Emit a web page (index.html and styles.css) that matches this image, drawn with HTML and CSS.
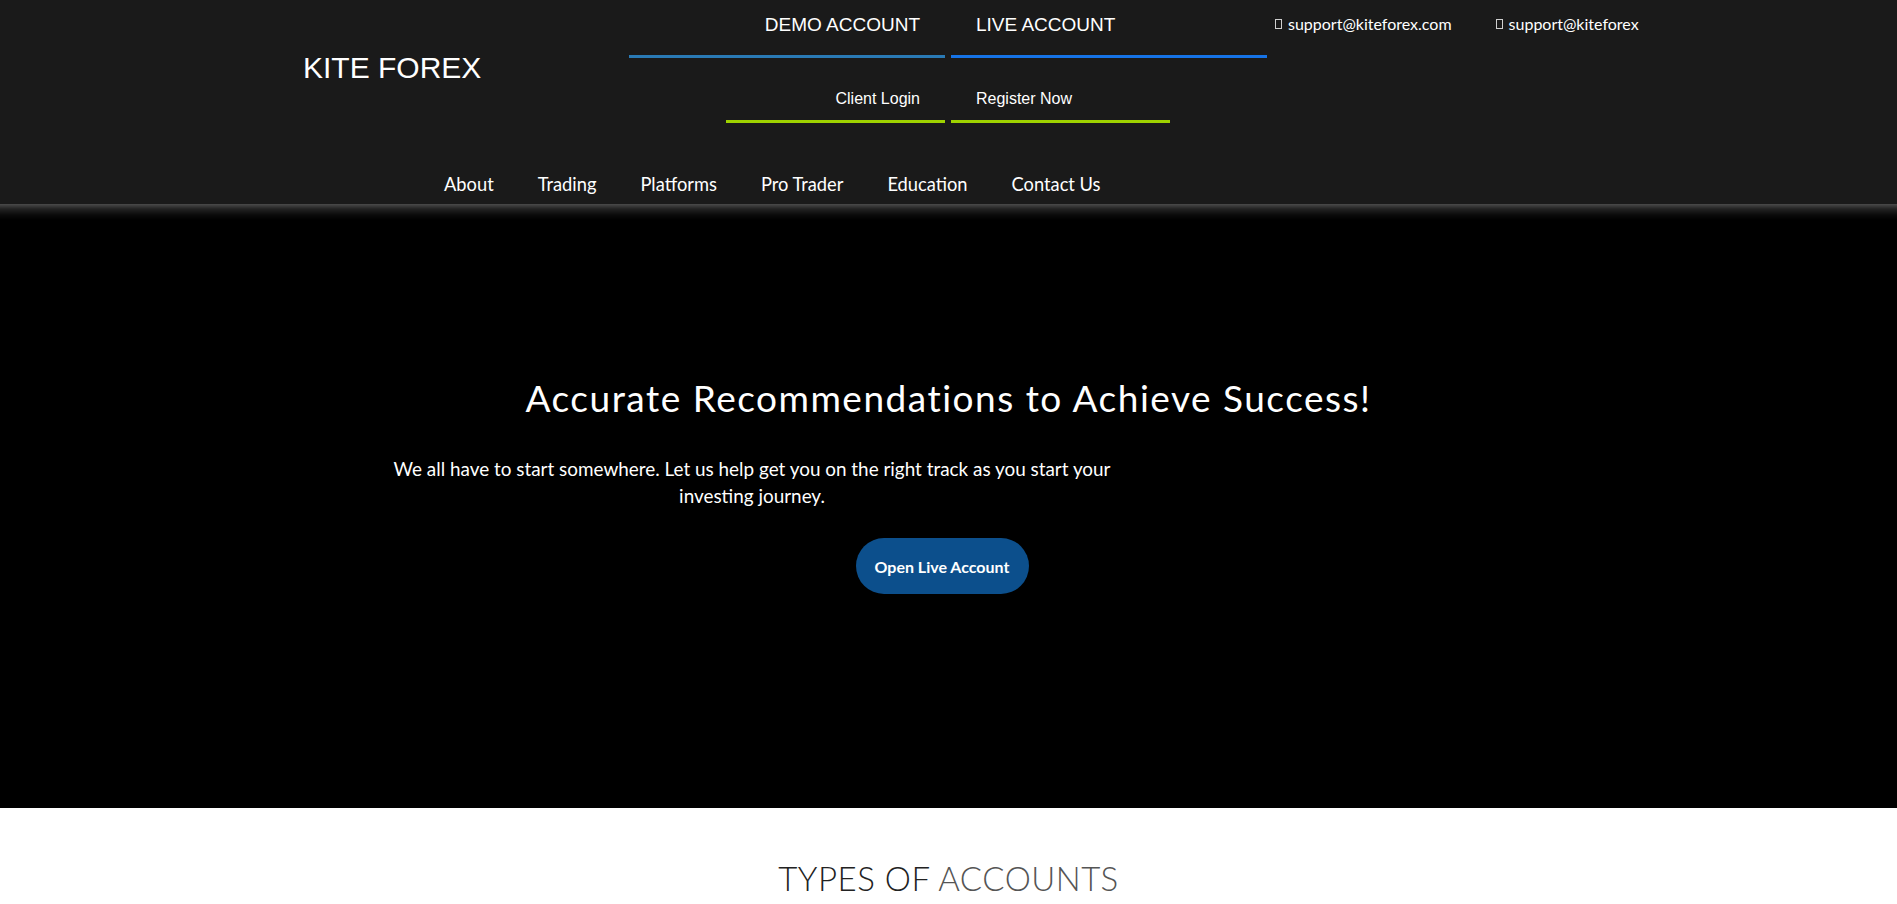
FILE: index.html
```html
<!DOCTYPE html>
<html lang="en">
<head>
<meta charset="utf-8">
<title>Kite Forex</title>
<link rel="stylesheet" href="styles.css">
</head>
<body>
<header class="site-header">
  <div class="top">
    <div class="brand">KITE FOREX</div>
    <div class="accounts">
      <div class="acc-row acc-row-main">
        <a class="acc acc-demo" href="#">DEMO ACCOUNT</a>
        <a class="acc acc-live" href="#">LIVE ACCOUNT</a>
      </div>
      <div class="acc-row acc-row-sub">
        <a class="sub sub-login" href="#">Client Login</a>
        <a class="sub sub-register" href="#">Register Now</a>
      </div>
    </div>
    <div class="contacts">
      <span class="mail"><span class="tofu"></span>support@kiteforex.com</span>
      <span class="mail"><span class="tofu"></span>support@kiteforex</span>
    </div>
  </div>
  <nav class="main-nav">
    <a href="#">About</a>
    <a href="#">Trading</a>
    <a href="#">Platforms</a>
    <a href="#">Pro Trader</a>
    <a href="#">Education</a>
    <a href="#">Contact Us</a>
  </nav>
</header>
<section class="hero">
  <h1 class="hero-title">Accurate Recommendations to Achieve Success!</h1>
  <p class="hero-text">We all have to start somewhere. Let us help get you on the right track as you start your investing journey.</p>
  <div class="hero-cta"><a class="btn" href="#">Open Live Account</a></div>
</section>
<section class="types">
  <h2 class="types-title"><span class="t-dark">TYPES OF</span> <span class="t-light">ACCOUNTS</span></h2>
</section>
</body>
</html>
```
FILE: styles.css
```css
html, body {
  margin: 0;
  padding: 0;
}
body {
  background: #fff;
  font-family: "Lato", "Liberation Sans", sans-serif;
  overflow: hidden;
}
a {
  color: #fff;
  text-decoration: none;
}
.site-header {
  background: #1a1a1a;
  height: 204px;
  box-sizing: border-box;
}
.top {
  display: grid;
  grid-template-columns: 629px 638px 1fr;
  height: 123px;
}
.brand {
  font-family: "Liberation Sans", Arial, sans-serif;
  font-size: 30px;
  color: #fff;
  padding-left: 303px;
  padding-top: 51px;
  line-height: 34px;
}
.accounts {
  display: flex;
  flex-direction: column;
  align-items: center;
}
.acc-row {
  display: flex;
  gap: 6px;
}
.acc {
  width: 316px;
  box-sizing: border-box;
  font-family: "Liberation Sans", Arial, sans-serif;
  font-size: 19px;
  line-height: 20px;
  padding-top: 15px;
  padding-bottom: 20px;
  border-bottom: 3px solid #2a7ab5;
}
.acc-demo {
  text-align: right;
  padding-right: 25px;
}
.acc-live {
  text-align: left;
  padding-left: 25px;
  border-bottom-color: #1673e6;
}
.sub {
  width: 219px;
  box-sizing: border-box;
  font-family: "Liberation Sans", Arial, sans-serif;
  font-size: 16px;
  line-height: 18px;
  padding-top: 32px;
  padding-bottom: 12px;
  border-bottom: 3px solid #9ed200;
}
.sub-login {
  text-align: right;
  padding-right: 25px;
}
.sub-register {
  text-align: left;
  padding-left: 25px;
}
.contacts {
  display: flex;
  gap: 44px;
  padding-left: 8px;
  padding-top: 14px;
  align-items: flex-start;
}
.mail {
  display: flex;
  align-items: center;
  color: #fff;
  font-size: 16px;
  line-height: 20px;
}
.tofu {
  display: inline-block;
  width: 5px;
  height: 8px;
  border: 1px solid #cfcfcf;
  margin-right: 6px;
}
.main-nav {
  display: flex;
  gap: 44px;
  padding-left: 444px;
  margin-top: 49px;
}
.main-nav a {
  font-size: 18.3px;
  line-height: 24px;
  color: #fff;
}
.hero {
  background: linear-gradient(#4a4a4a 0, #222 5px, #0a0a0a 11px, #000 16px);
  height: 604px;
  box-sizing: border-box;
  padding-top: 173px;
  color: #fff;
}
.hero-title {
  margin: 0;
  text-align: center;
  font-weight: 400;
  font-size: 37px;
  letter-spacing: 1.5px;
  line-height: 42px;
}
.hero-text {
  width: 740px;
  margin: 36px 0 0 382px;
  text-align: center;
  font-size: 18.9px;
  line-height: 27px;
}
.hero-cta {
  display: flex;
  justify-content: center;
  padding-right: 13px;
  margin-top: 29px;
}
.btn {
  display: flex;
  align-items: center;
  justify-content: center;
  width: 173px;
  height: 56px;
  border-radius: 28px;
  background: #0c4f8c;
  color: #fff;
  font-weight: 700;
  font-size: 16px;
}
.types {
  background: #fff;
  height: 96px;
  padding-top: 50px;
  box-sizing: border-box;
}
.types-title {
  margin: 0;
  text-align: center;
  font-weight: 300;
  font-size: 33px;
  line-height: 40px;
  letter-spacing: 0.5px;
}
.t-dark {
  color: #222;
}
.t-light {
  color: #555;
}
```
